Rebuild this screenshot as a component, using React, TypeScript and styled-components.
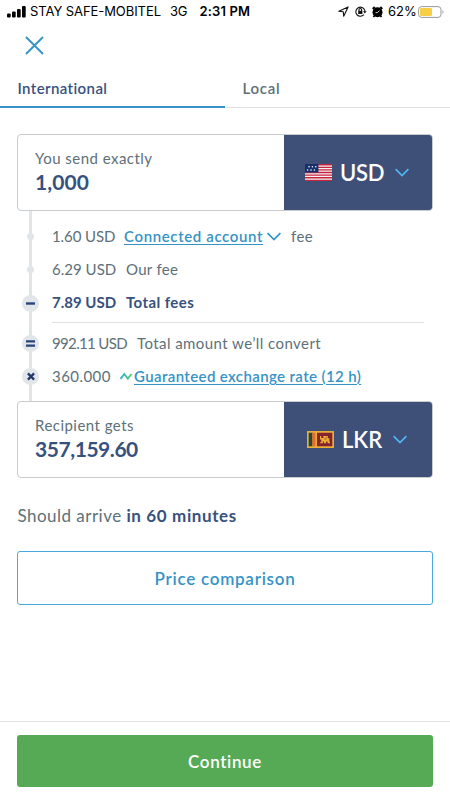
import React from "react";
import styled, { createGlobalStyle } from "styled-components";

const navy = "#37517e";
const slate = "#5d7079";
const blue = "#3593c6";
const panel = "#3e5078";

const Global = createGlobalStyle`
  * { box-sizing: border-box; }
  body { margin: 0; background: #fff; }
  button { font: inherit; cursor: pointer; }
`;

const Screen = styled.main`
  width: 450px;
  height: 800px;
  display: flex;
  flex-direction: column;
  overflow: hidden;
  background: #fff;
  color: ${slate};
  font-family: Lato, "Open Sans", sans-serif;
`;

const StatusBar = styled.div`
  height: 24px;
  flex: none;
  display: flex;
  align-items: center;
  padding: 0 6px 1px 7px;
  color: #000;
  font: 400 13px/23px Inter, Roboto, sans-serif;
  white-space: nowrap;
`;

const StatusText = styled.span<{ $w: number; $bold?: boolean; $track?: number }>`
  width: ${(p) => p.$w}px;
  flex: none;
  font-weight: ${(p) => (p.$bold ? 600 : 400)};
  letter-spacing: ${(p) => p.$track ?? 0}px;
`;

const StatusIcons = styled.div`
  margin-left: auto;
  display: flex;
  align-items: center;
`;

const Icon = styled.svg<{ $ml?: number; $mr?: number }>`
  display: block;
  flex: none;
  overflow: visible;
  margin-left: ${(p) => p.$ml ?? 0}px;
  margin-right: ${(p) => p.$mr ?? 0}px;
`;

const Header = styled.header`
  height: 48px;
  flex: none;
  padding: 12px 25px;
`;

const CloseButton = styled.button`
  display: block;
  border: 0;
  padding: 0;
  background: none;
`;

const Tabs = styled.nav`
  height: 36px;
  flex: none;
  display: grid;
  grid-template-columns: 1fr 1fr;
  border-bottom: 1px solid #e0e2e4;
`;

const Tab = styled.div<{ $active?: boolean }>`
  height: 36px;
  padding-left: 17.5px;
  border-bottom: ${(p) => (p.$active ? `2px solid ${blue}` : "0")};
  color: ${(p) => (p.$active ? navy : slate)};
  font-size: 15px;
  font-weight: 600;
  line-height: 33px;
  letter-spacing: ${(p) => (p.$active ? 0.4 : 0.7)}px;
`;

const Content = styled.section`
  flex: 1;
  padding: 26px 17px 0;
`;

const AmountCard = styled.div`
  height: 77px;
  display: flex;
  border: 1px solid #c9cccf;
  border-radius: 4px;
  overflow: hidden;
  background: #fff;
`;

const AmountField = styled.div`
  flex: 1;
  padding: 12px 0 0 17px;
`;

const FieldLabel = styled.div<{ $track: number }>`
  font-size: 15px;
  line-height: 22px;
  letter-spacing: ${(p) => p.$track}px;
`;

const Amount = styled.div<{ $track: number }>`
  color: ${navy};
  font-size: 21px;
  font-weight: 700;
  line-height: 26px;
  letter-spacing: ${(p) => p.$track}px;
`;

const Currency = styled.button<{ $pad: number }>`
  width: 148px;
  border: 0;
  display: flex;
  align-items: center;
  padding: 0 0 0 ${(p) => p.$pad}px;
  background: ${panel};
  color: #fff;
`;

const Code = styled.span<{ $w: number; $track?: number }>`
  width: ${(p) => p.$w}px;
  margin-left: 8px;
  padding-top: 1px;
  text-align: left;
  font-size: 22px;
  line-height: 30px;
  font-weight: 600;
  letter-spacing: ${(p) => p.$track ?? 0}px;
`;

const Breakdown = styled.div`
  height: 190px;
  padding-top: 9px;
  background: linear-gradient(#e2e5e7, #e2e5e7) 12px 0 / 3px 100% no-repeat;
`;

const FeeRow = styled.div<{ $h: number; $strong?: boolean }>`
  height: ${(p) => p.$h}px;
  display: flex;
  align-items: center;
  color: ${(p) => (p.$strong ? navy : slate)};
  font-size: 15px;
  font-weight: ${(p) => (p.$strong ? 700 : 400)};
  line-height: 22px;
  white-space: nowrap;
`;

const Marker = styled.span`
  width: 27px;
  margin-right: 8px;
  flex: none;
  display: flex;
  justify-content: center;
`;

const Dot = styled.i`
  width: 7px;
  height: 7px;
  border-radius: 50%;
  background: #e2e5e7;
`;

const Badge = styled.span`
  width: 17px;
  height: 17px;
  display: grid;
  place-items: center;
  border-radius: 50%;
  background: #e2e6e8;
`;

const Value = styled.span<{ $w: number; $track?: number }>`
  width: ${(p) => p.$w}px;
  flex: none;
  padding-bottom: 2px;
  letter-spacing: ${(p) => p.$track ?? 0}px;
`;

const Label = styled.span<{ $track?: number }>`
  padding-bottom: 2px;
  letter-spacing: ${(p) => p.$track ?? 0.3}px;
`;

const Link = styled.a<{ $track: number }>`
  padding-bottom: 2px;
  color: ${blue};
  font-weight: 600;
  letter-spacing: ${(p) => p.$track}px;
  text-decoration: underline;
  text-decoration-thickness: 1px;
  text-underline-offset: 2px;
  text-decoration-skip-ink: auto;
`;

const Rule = styled.hr`
  height: 1px;
  margin: 2px 9px 4px 35px;
  border: 0;
  background: #dfe2e4;
`;

const Arrival = styled.p`
  margin: 24px 0 22px;
  padding-left: 0.5px;
  font-size: 17px;
  line-height: 27px;
  letter-spacing: 0.47px;

  strong {
    color: ${navy};
    font-weight: 700;
    letter-spacing: 0.62px;
  }
`;

const CompareButton = styled.button`
  width: 100%;
  height: 54px;
  display: block;
  padding: 0;
  border: 1px solid #4aa9dc;
  border-radius: 3px;
  background: #fff;
  color: ${blue};
  font-size: 17px;
  font-weight: 600;
  letter-spacing: 0.75px;
`;

const Footer = styled.footer`
  height: 79px;
  flex: none;
  padding: 13px 17px 0;
  border-top: 1px solid #e3e4e5;
`;

const ContinueButton = styled.button`
  width: 100%;
  height: 52px;
  display: block;
  padding: 0;
  border: 0;
  border-radius: 3px;
  background: #57aa55;
  color: #fff;
  font-size: 17px;
  font-weight: 600;
  letter-spacing: 0.65px;
`;

function Chevron({ color = blue, ml = 0, mr = 0 }: { color?: string; ml?: number; mr?: number }) {
  return (
    <Icon $ml={ml} $mr={mr} width="14" height="8" viewBox="0 0 14 8" fill="none" stroke={color} strokeWidth="1.7">
      <path d="M.6.2 7 6.5 13.4.2" />
    </Icon>
  );
}

function UsFlag() {
  return (
    <Icon width="27" height="17" viewBox="0 0 27 17">
      <path fill="#f4f2f3" d="M0 0h27v17H0z" />
      <path stroke="#c9243f" strokeWidth="1.35" d="M0 .7h27M0 3.3h27M0 5.9h27M0 8.5h27M0 11.1h27M0 13.7h27M0 16.3h27" />
      <path fill="#192f6b" d="M0 0h13.4v8.4H0z" />
      <g fill="#fff">
        {[3.3, 6.7, 10.1].map((x) => <circle key={x} cx={x + 0.7} cy="2.8" r=".8" />)}
        {[2.6, 6, 9.4].map((x) => <circle key={x} cx={x} cy="6" r=".8" />)}
      </g>
    </Icon>
  );
}

function LkFlag() {
  return (
    <Icon width="27" height="17" viewBox="0 0 27 17">
      <path fill="#e9ae35" d="M0 0h27v17H0z" />
      <path fill="#1d4b40" d="M1.7 1.7h3.7v13.6H1.7z" />
      <path fill="#ec682c" d="M5.4 1.7h3v13.6h-3z" />
      <path fill="#862331" d="M10 1.7h15.3v13.6H10z" />
      <path fill="#e9ae35" d="M13 5h1.2v2h2.2V5h4.4v2.2h1.5v3.6h.7v1.4h-2.4v-1.6h-1.5v1.6h-2.2v-1.6h-1v1.6h-2.6v-1.3h1V8.4H13z" />
      <path stroke="#862331" strokeWidth=".7" d="M17.3 7.9h2.2M18.8 6.2h.9" />
    </Icon>
  );
}

export default function App() {
  return (
    <>
      <Global />
      <Screen>
        <StatusBar>
          <Icon width="19" height="12" viewBox="0 0 19 12" $mr={4}>
            <rect y="7.5" width="3.7" height="4" rx="1" />
            <rect x="5" y="5.5" width="3.7" height="6" rx="1" />
            <rect x="10" y="3" width="3.7" height="8.5" rx="1" />
            <rect x="15" width="3.7" height="11.5" rx="1" />
          </Icon>
          <StatusText $w={140} $track={-0.07}>STAY SAFE-MOBITEL</StatusText>
          <StatusText $w={29.5} $track={-0.2}>3G</StatusText>
          <StatusText $w={60} $bold $track={0.15}>2:31 PM</StatusText>
          <StatusIcons>
            <Icon width="11" height="11" viewBox="0 0 11 11" $mr={6} fill="none" stroke="#111" strokeWidth="1.1" strokeLinejoin="round">
              <path d="M.8 5.3 10.1.9 5.7 10.2 5.3 5.7z" />
            </Icon>
            <Icon width="12" height="11" viewBox="0 0 12 11" $mr={5} fill="none" stroke="#111" strokeWidth="1.1">
              <path d="M8.9 8.7A4.6 4.6 0 1 1 9.8 4.3v1.5" />
              <path fill="#111" stroke="none" d="M8 5.2h3.6L9.8 7.5z" />
              <rect x="3.2" y="4.8" width="4.2" height="3.2" fill="#111" stroke="none" />
              <path d="M4 5V3.8a1.3 1.3 0 0 1 2.6 0V5" />
            </Icon>
            <Icon width="11" height="12" viewBox="0 0 11 12" $mr={5}>
              <circle cx="5.5" cy="6.2" r="5" />
              <path d="M.7 3 2.7 1M8.3 1l2 2M2.4 9.8l-.9 1.3M8.6 9.8l.9 1.3" stroke="#000" strokeWidth="1.8" />
              <path d="M5.5 6.6 7.4 4.6M5.5 6.6H3.6" stroke="#fff" strokeWidth=".8" fill="none" />
            </Icon>
            <StatusText $w={30} $track={0}>62%</StatusText>
            <Icon width="26" height="12" viewBox="0 0 26 12">
              <rect x=".6" y=".6" width="22.4" height="10.8" rx="3" fill="#fff" stroke="#999" />
              <rect x="2" y="2" width="12" height="8" rx="1.2" fill="#f8ce45" />
              <path d="M24.5 4q2 2 0 4z" fill="#999" />
            </Icon>
          </StatusIcons>
        </StatusBar>

        <Header>
          <CloseButton aria-label="Close">
            <Icon width="19" height="19" viewBox="0 0 19 19" fill="none" stroke={blue} strokeWidth="1.9">
              <path d="m1 1 17 17M18 1 1 18" />
            </Icon>
          </CloseButton>
        </Header>

        <Tabs>
          <Tab $active>International</Tab>
          <Tab>Local</Tab>
        </Tabs>

        <Content>
          <AmountCard>
            <AmountField>
              <FieldLabel $track={0.47}>You send exactly</FieldLabel>
              <Amount $track={0.1}>1,000</Amount>
            </AmountField>
            <Currency $pad={21}>
              <UsFlag />
              <Code $w={55} $track={-0.3}>USD</Code>
              <Chevron color="#4fb5f5" />
            </Currency>
          </AmountCard>

          <Breakdown>
            <FeeRow $h={33}>
              <Marker><Dot /></Marker>
              <Value $w={72} $track={-0.08}>1.60 USD</Value>
              <Link $track={0.63}>Connected account</Link>
              <Chevron ml={4} mr={10} />
              <Label>fee</Label>
            </FeeRow>
            <FeeRow $h={33}>
              <Marker><Dot /></Marker>
              <Value $w={74} $track={0.02}>6.29 USD</Value>
              <Label>Our fee</Label>
            </FeeRow>
            <FeeRow $h={34} $strong>
              <Marker>
                <Badge>
                  <Icon width="9" height="3" viewBox="0 0 9 3"><path fill="#29447a" d="M0 .3h9v2.4H0z" /></Icon>
                </Badge>
              </Marker>
              <Value $w={74} $track={0}>7.89 USD</Value>
              <Label $track={0.42}>Total fees</Label>
            </FeeRow>
            <Rule />
            <FeeRow $h={33}>
              <Marker>
                <Badge>
                  <Icon width="9" height="7" viewBox="0 0 9 7"><path fill="#29447a" d="M0 .2h9v2.3H0zM0 4.5h9v2.3H0z" /></Icon>
                </Badge>
              </Marker>
              <Value $w={85} $track={-0.65}>992.11 USD</Value>
              <Label $track={0.43}>Total amount we’ll convert</Label>
            </FeeRow>
            <FeeRow $h={33}>
              <Marker>
                <Badge>
                  <Icon width="8" height="7" viewBox="0 0 8 7"><path stroke="#20376a" strokeWidth="2.2" d="m.9.4 6.2 6.2M7.1.4.9 6.6" /></Icon>
                </Badge>
              </Marker>
              <Value $w={68} $track={0.45}>360.000</Value>
              <Icon width="12" height="7" viewBox="0 0 12 7" fill="none" strokeWidth="1.9" $mr={2}>
                <defs>
                  <linearGradient id="rate"><stop stopColor="#37aee2" /><stop offset="1" stopColor="#55ce68" /></linearGradient>
                </defs>
                <path stroke="url(#rate)" d="M.5 5.9 4.3 1l3.5 4.6L11.5 1" />
              </Icon>
              <Link $track={0.39}>Guaranteed exchange rate (12 h)</Link>
            </FeeRow>
          </Breakdown>

          <AmountCard>
            <AmountField>
              <FieldLabel $track={0.47}>Recipient gets</FieldLabel>
              <Amount $track={-0.45}>357,159.60</Amount>
            </AmountField>
            <Currency $pad={23}>
              <LkFlag />
              <Code $w={51}>LKR</Code>
              <Chevron color="#4fb5f5" />
            </Currency>
          </AmountCard>

          <Arrival>Should arrive <strong>in 60 minutes</strong></Arrival>
          <CompareButton>Price comparison</CompareButton>
        </Content>

        <Footer>
          <ContinueButton>Continue</ContinueButton>
        </Footer>
      </Screen>
    </>
  );
}
